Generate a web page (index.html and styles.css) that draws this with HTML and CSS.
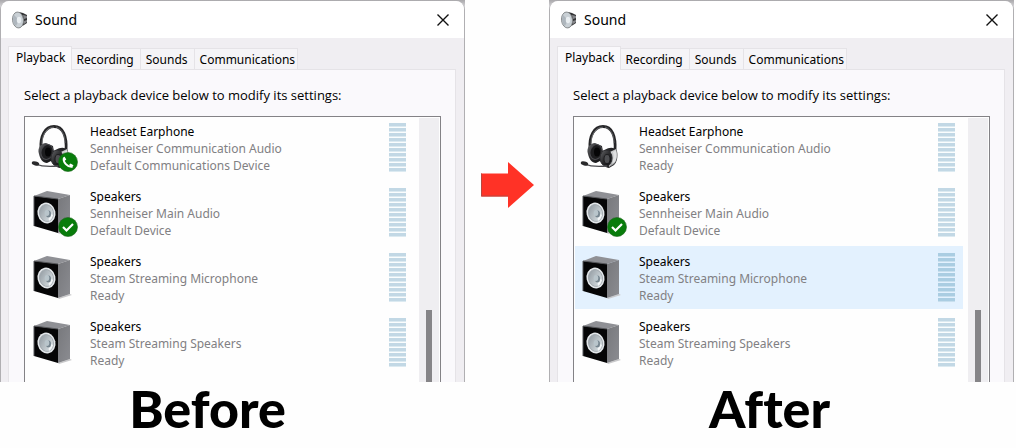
FILE: index.html
```html
<!DOCTYPE html>
<html lang="en">
<head>
<meta charset="utf-8">
<title>Sound settings: before and after</title>
<link rel="stylesheet" href="styles.css">
</head>
<body>
<svg class="defs" aria-hidden="true">
  <defs>
    <linearGradient id="side" x1="0" y1="0" x2="1" y2="1"><stop offset="0" stop-color="#77787c"/><stop offset="1" stop-color="#8b8c91"/></linearGradient>
    <linearGradient id="cone" x1="0" y1="0" x2="1" y2="1"><stop offset="0" stop-color="#8d969d"/><stop offset="1" stop-color="#e4ebee"/></linearGradient>
    <linearGradient id="cup" x1="0" y1="0" x2="1" y2="1"><stop offset="0" stop-color="#66676a"/><stop offset=".5" stop-color="#29292b"/><stop offset="1" stop-color="#0c0c0e"/></linearGradient>
    <linearGradient id="plate" x1="0" y1="0" x2="1" y2="1"><stop offset="0" stop-color="#f4f4f4"/><stop offset="1" stop-color="#77797c"/></linearGradient>
    <symbol id="speaker" viewBox="0 0 48 48">
      <path d="M27 45 39 41l2 1-13 4z" fill="#c9c9cb"/>
      <path d="M3 8 16 3l23 4-12 4z" fill="#8f9095"/>
      <path d="M27 11 39 7v34l-12 4z" fill="url(#side)"/>
      <path d="M3 8l24 3v34L3 38z" fill="#050506"/>
      <path d="M3 38V8l24 3" fill="none" stroke="#55565a" stroke-width="1"/>
      <ellipse cx="15.500" cy="25" rx="9" ry="10.500" fill="#e3e7ea" transform="rotate(-12 15.500 25)"/>
      <ellipse cx="15.500" cy="25" rx="7" ry="8.500" fill="url(#cone)" stroke="#9da4a9" stroke-width=".8" transform="rotate(-12 15.500 25)"/>
      <path d="M17 25l5 2c-1 3-2 5-4 6z" fill="#f4f7f8"/>
      <ellipse cx="17.500" cy="26" rx="2.500" ry="3.500" fill="#76858f"/>
      <ellipse cx="16" cy="25" rx="2.300" ry="3" fill="#b9c5cb"/>
    </symbol>
    <symbol id="headset" viewBox="0 0 48 48">
      <g transform="translate(1 2)">
      <path d="M9 24C8 11 13 1.500 22 1.500S35 11 34 26" fill="none" stroke="#262628" stroke-width="2.800"/>
      <path d="M10 19C10 9 15 2 22 2.200" fill="none" stroke="#77787b" stroke-width=".8"/>
      <path d="M24 2c6 2 9 8 9 16" fill="none" stroke="#77787b" stroke-width=".7"/>
      <path d="M7 29C5 23 9 18 14 18l7 3 2 13-8 4c-4 0-7-4-8-9z" fill="url(#cup)"/>
      <ellipse cx="15" cy="27" rx="6" ry="7.500" fill="#1d1d1f" stroke="#4b4b4f" stroke-width="1" transform="rotate(15 15 27)"/>
      <ellipse cx="16" cy="27" rx="3" ry="4.500" fill="#060607"/>
      <path d="M24 25c4-3 10-3 12 1 1 6 0 11-3 14l-5 3c-4 0-6-4-6-8z" fill="#252527"/>
      <path d="M27 28l8-4c2 6 1 12-2 15l-5 3z" fill="url(#plate)"/>
      <ellipse cx="25" cy="33" rx="6" ry="8" fill="url(#cup)" stroke="#2d2d30" stroke-width="1"/>
      <ellipse cx="26" cy="34" rx="3" ry="4.500" fill="#4e4f52" stroke="#141416" stroke-width=".8"/>
      <path d="M32 27l3-2c1 5 1 9-1 12l-3 2c1-4 2-8 1-12z" fill="#dfe0e1"/>
      <path d="M3 39c8 3 14 3 23 2" fill="none" stroke="#4b4b4f" stroke-width="1.300"/>
      <ellipse cx="3.500" cy="38.500" rx="3.800" ry="2" fill="#29292b" transform="rotate(14 3.500 38.500)"/>
      </g>
    </symbol>
    <symbol id="check" viewBox="0 0 20 20">
      <circle cx="10" cy="10" r="9.500" fill="#087c0b" stroke="#1c641c" stroke-width=".6"/>
      <path d="M5 10l3.500 3.500L15 7" fill="none" stroke="#fff" stroke-width="2.200"/>
    </symbol>
    <symbol id="phone" viewBox="0 0 20 20">
      <circle cx="10" cy="10" r="9.500" fill="#087c0b" stroke="#1c641c" stroke-width=".6"/>
      <path d="M6 5.500c-1.500 4.500 3.500 10 8.500 9.200" fill="none" stroke="#fff" stroke-width="2"/>
      <path d="M6.500 4.500l1.800 3-1.800 1.500-1.600-2zM11 13l1.500-1.500 3 1.800-1.500 2z" fill="#fff"/>
    </symbol>
    <symbol id="volume" viewBox="0 0 16 18">
      <path d="M7 1l4 1 4 2v8l-3 2-5 3z" fill="#343537"/>
      <path d="M11 4l4 1v2l-3 1zM12 10l3-1v2l-3 2z" fill="#85868a"/>
      <ellipse cx="6" cy="9" rx="5.500" ry="8" fill="#c9d0d5" stroke="#85888b" stroke-width=".9" transform="rotate(-7 6 9)"/>
      <path d="M2 4l5 5-3 6C1 13 0 7 2 4z" fill="#aeb6bd"/>
      <ellipse cx="7" cy="9" rx="2.200" ry="3.200" fill="#e9eef1"/>
    </symbol>
    <symbol id="cross" viewBox="0 0 14 14">
      <path d="M1.500 1.500l11 11M12.500 1.500l-11 11" stroke="#111" stroke-width="1.400"/>
    </symbol>
  </defs>
</svg>
<main class="comparison">
  <figure class="side">
    <div class="backdrop">
      <section class="window" aria-label="Sound, before">
        <header class="titlebar">
          <svg class="app-icon"><use href="#volume"/></svg>
          <h2 class="title">Sound</h2>
          <button class="close" type="button" aria-label="Close"><svg class="cross"><use href="#cross"/></svg></button>
        </header>
        <div class="tabs" role="tablist">
          <button class="tab selected" type="button" role="tab" aria-selected="true">Playback</button>
          <button class="tab" type="button" role="tab">Recording</button>
          <button class="tab" type="button" role="tab">Sounds</button>
          <button class="tab" type="button" role="tab">Communications</button>
        </div>
        <div class="panel" role="tabpanel">
          <p class="hint">Select a playback device below to modify its settings:</p>
          <div class="list">
            <ul class="devices">
              <li class="device"><span class="picture"><svg class="glyph"><use href="#headset"/></svg><svg class="badge"><use href="#phone"/></svg></span><div class="info"><h3 class="name">Headset Earphone</h3><p>Sennheiser Communication Audio</p><p>Default Communications Device</p></div><span class="meter"></span></li>
              <li class="device"><span class="picture"><svg class="glyph"><use href="#speaker"/></svg><svg class="badge"><use href="#check"/></svg></span><div class="info"><h3 class="name">Speakers</h3><p>Sennheiser Main Audio</p><p>Default Device</p></div><span class="meter"></span></li>
              <li class="device"><span class="picture"><svg class="glyph"><use href="#speaker"/></svg></span><div class="info"><h3 class="name">Speakers</h3><p>Steam Streaming Microphone</p><p>Ready</p></div><span class="meter"></span></li>
              <li class="device"><span class="picture"><svg class="glyph"><use href="#speaker"/></svg></span><div class="info"><h3 class="name">Speakers</h3><p>Steam Streaming Speakers</p><p>Ready</p></div><span class="meter"></span></li>
            </ul>
            <div class="scrollbar"><div class="thumb"></div></div>
          </div>
        </div>
      </section>
    </div>
    <figcaption class="caption">Before</figcaption>
  </figure>
  <svg class="arrow" viewBox="0 0 53 46" aria-hidden="true"><path d="M0 11.500h27V0l26 23-26 23V34.500H0z" fill="#ff3226"/><path d="M.5 11.500v22.500H27" fill="none" stroke="#b8473f"/></svg>
  <figure class="side">
    <div class="backdrop">
      <section class="window" aria-label="Sound, after">
        <header class="titlebar">
          <svg class="app-icon"><use href="#volume"/></svg>
          <h2 class="title">Sound</h2>
          <button class="close" type="button" aria-label="Close"><svg class="cross"><use href="#cross"/></svg></button>
        </header>
        <div class="tabs" role="tablist">
          <button class="tab selected" type="button" role="tab" aria-selected="true">Playback</button>
          <button class="tab" type="button" role="tab">Recording</button>
          <button class="tab" type="button" role="tab">Sounds</button>
          <button class="tab" type="button" role="tab">Communications</button>
        </div>
        <div class="panel" role="tabpanel">
          <p class="hint">Select a playback device below to modify its settings:</p>
          <div class="list">
            <ul class="devices">
              <li class="device"><span class="picture"><svg class="glyph"><use href="#headset"/></svg></span><div class="info"><h3 class="name">Headset Earphone</h3><p>Sennheiser Communication Audio</p><p>Ready</p></div><span class="meter"></span></li>
              <li class="device"><span class="picture"><svg class="glyph"><use href="#speaker"/></svg><svg class="badge"><use href="#check"/></svg></span><div class="info"><h3 class="name">Speakers</h3><p>Sennheiser Main Audio</p><p>Default Device</p></div><span class="meter"></span></li>
              <li class="device active"><span class="picture"><svg class="glyph"><use href="#speaker"/></svg></span><div class="info"><h3 class="name">Speakers</h3><p>Steam Streaming Microphone</p><p>Ready</p></div><span class="meter"></span></li>
              <li class="device"><span class="picture"><svg class="glyph"><use href="#speaker"/></svg></span><div class="info"><h3 class="name">Speakers</h3><p>Steam Streaming Speakers</p><p>Ready</p></div><span class="meter"></span></li>
            </ul>
            <div class="scrollbar"><div class="thumb"></div></div>
          </div>
        </div>
      </section>
    </div>
    <figcaption class="caption">After</figcaption>
  </figure>
</main>
</body>
</html>
```

FILE: styles.css
```css
* { box-sizing: border-box; }
body {
  margin: 0;
  background: #fefefe;
  color: #000;
  font: 12px/17px "Noto Sans", "Open Sans", sans-serif;
}
h2, h3, p, ul, figure { margin: 0; padding: 0; font-size: inherit; font-weight: 400; }
ul { list-style: none; }
button { border: 0; padding: 0; background: none; color: inherit; font: inherit; }
svg { display: block; }
.defs { position: absolute; width: 0; height: 0; }

.comparison {
  display: grid;
  grid-template-columns: 1fr 84px 1fr;
  padding-right: 2px;
}
.arrow { width: 53px; height: 46px; margin: 162px 0 0 16px; }
.backdrop { padding-top: 1px; background: linear-gradient(#a9a8ab, #dedde0 8px); }
.window {
  border: 1px solid #b0afb2;
  border-width: 0 1px;
  border-radius: 9px 9px 0 0;
  background: #f0eef2;
}
.titlebar {
  display: flex;
  align-items: center;
  height: 37px;
  padding: 0 14px 0 11px;
  border-radius: 8px 8px 0 0;
  background: #fff;
}
.app-icon { width: 16px; height: 18px; }
.title { margin-left: 7px; font-size: 14px; line-height: 20px; }
.close { margin-left: auto; }
.cross { width: 14px; height: 14px; }

.tabs { display: flex; align-items: flex-end; height: 31px; padding-left: 7px; }
.tab {
  height: 21px;
  padding: 0 6px 0 5px;
  border: 1px solid #e5e3e7;
  border-width: 1px 1px 0 0;
  background: #f5f4f7;
}
.tab:last-child { padding-right: 2px; }
.tab.selected {
  z-index: 1;
  height: 24px;
  margin-bottom: -1px;
  padding: 0 5px 3px 7px;
  border-left-width: 1px;
  background: #faf9fc;
}
.panel {
  margin: 0 8px 0 7px;
  padding: 17px 14px 0 15px;
  border: 1px solid #e5e3e7;
  border-bottom: 0;
  background: #faf9fc;
}
.hint { height: 29px; font-family: "Open Sans", sans-serif; font-size: 13px; }
.list {
  display: flex;
  border: 1px solid #838286;
  border-bottom: 0;
  background: #fefefe;
}
.devices { flex: 1; padding: 0 5px 6px 1px; }
.device {
  display: flex;
  height: 63px;
  margin-bottom: 2px;
  padding: 7px 8px 5px 5px;
}
.device:first-child { margin-top: -1px; }
.active { background: #e3f1fe; }
.picture { position: relative; width: 59px; }
.glyph { width: 48px; height: 48px; }
.badge { position: absolute; left: 27px; top: 29px; width: 20px; height: 20px; }
.info { flex: 1; color: #818083; }
.name { color: #000; }
.meter {
  width: 17px;
  height: 49px;
  background: repeating-linear-gradient(#c2d8e5 0 3px, #dceaf1 3px 4px, #fafdfe 4px 5px);
}
.active .meter {
  background: repeating-linear-gradient(#aacde2 0 3px, #c8dfee 3px 4px, #e3f1fe 4px 5px);
}
.scrollbar { width: 20px; margin: 1px 1px 0 0; padding: 192px 7px 0; background: #efeef1; }
.thumb { height: 100%; background: #858487; }
.caption {
  font: 900 52px/52px Lato, sans-serif;
  font-variant-ligatures: none;
  text-align: center;
  padding-right: 50px;
}
.side:last-child .caption { padding-right: 24px; }
```
